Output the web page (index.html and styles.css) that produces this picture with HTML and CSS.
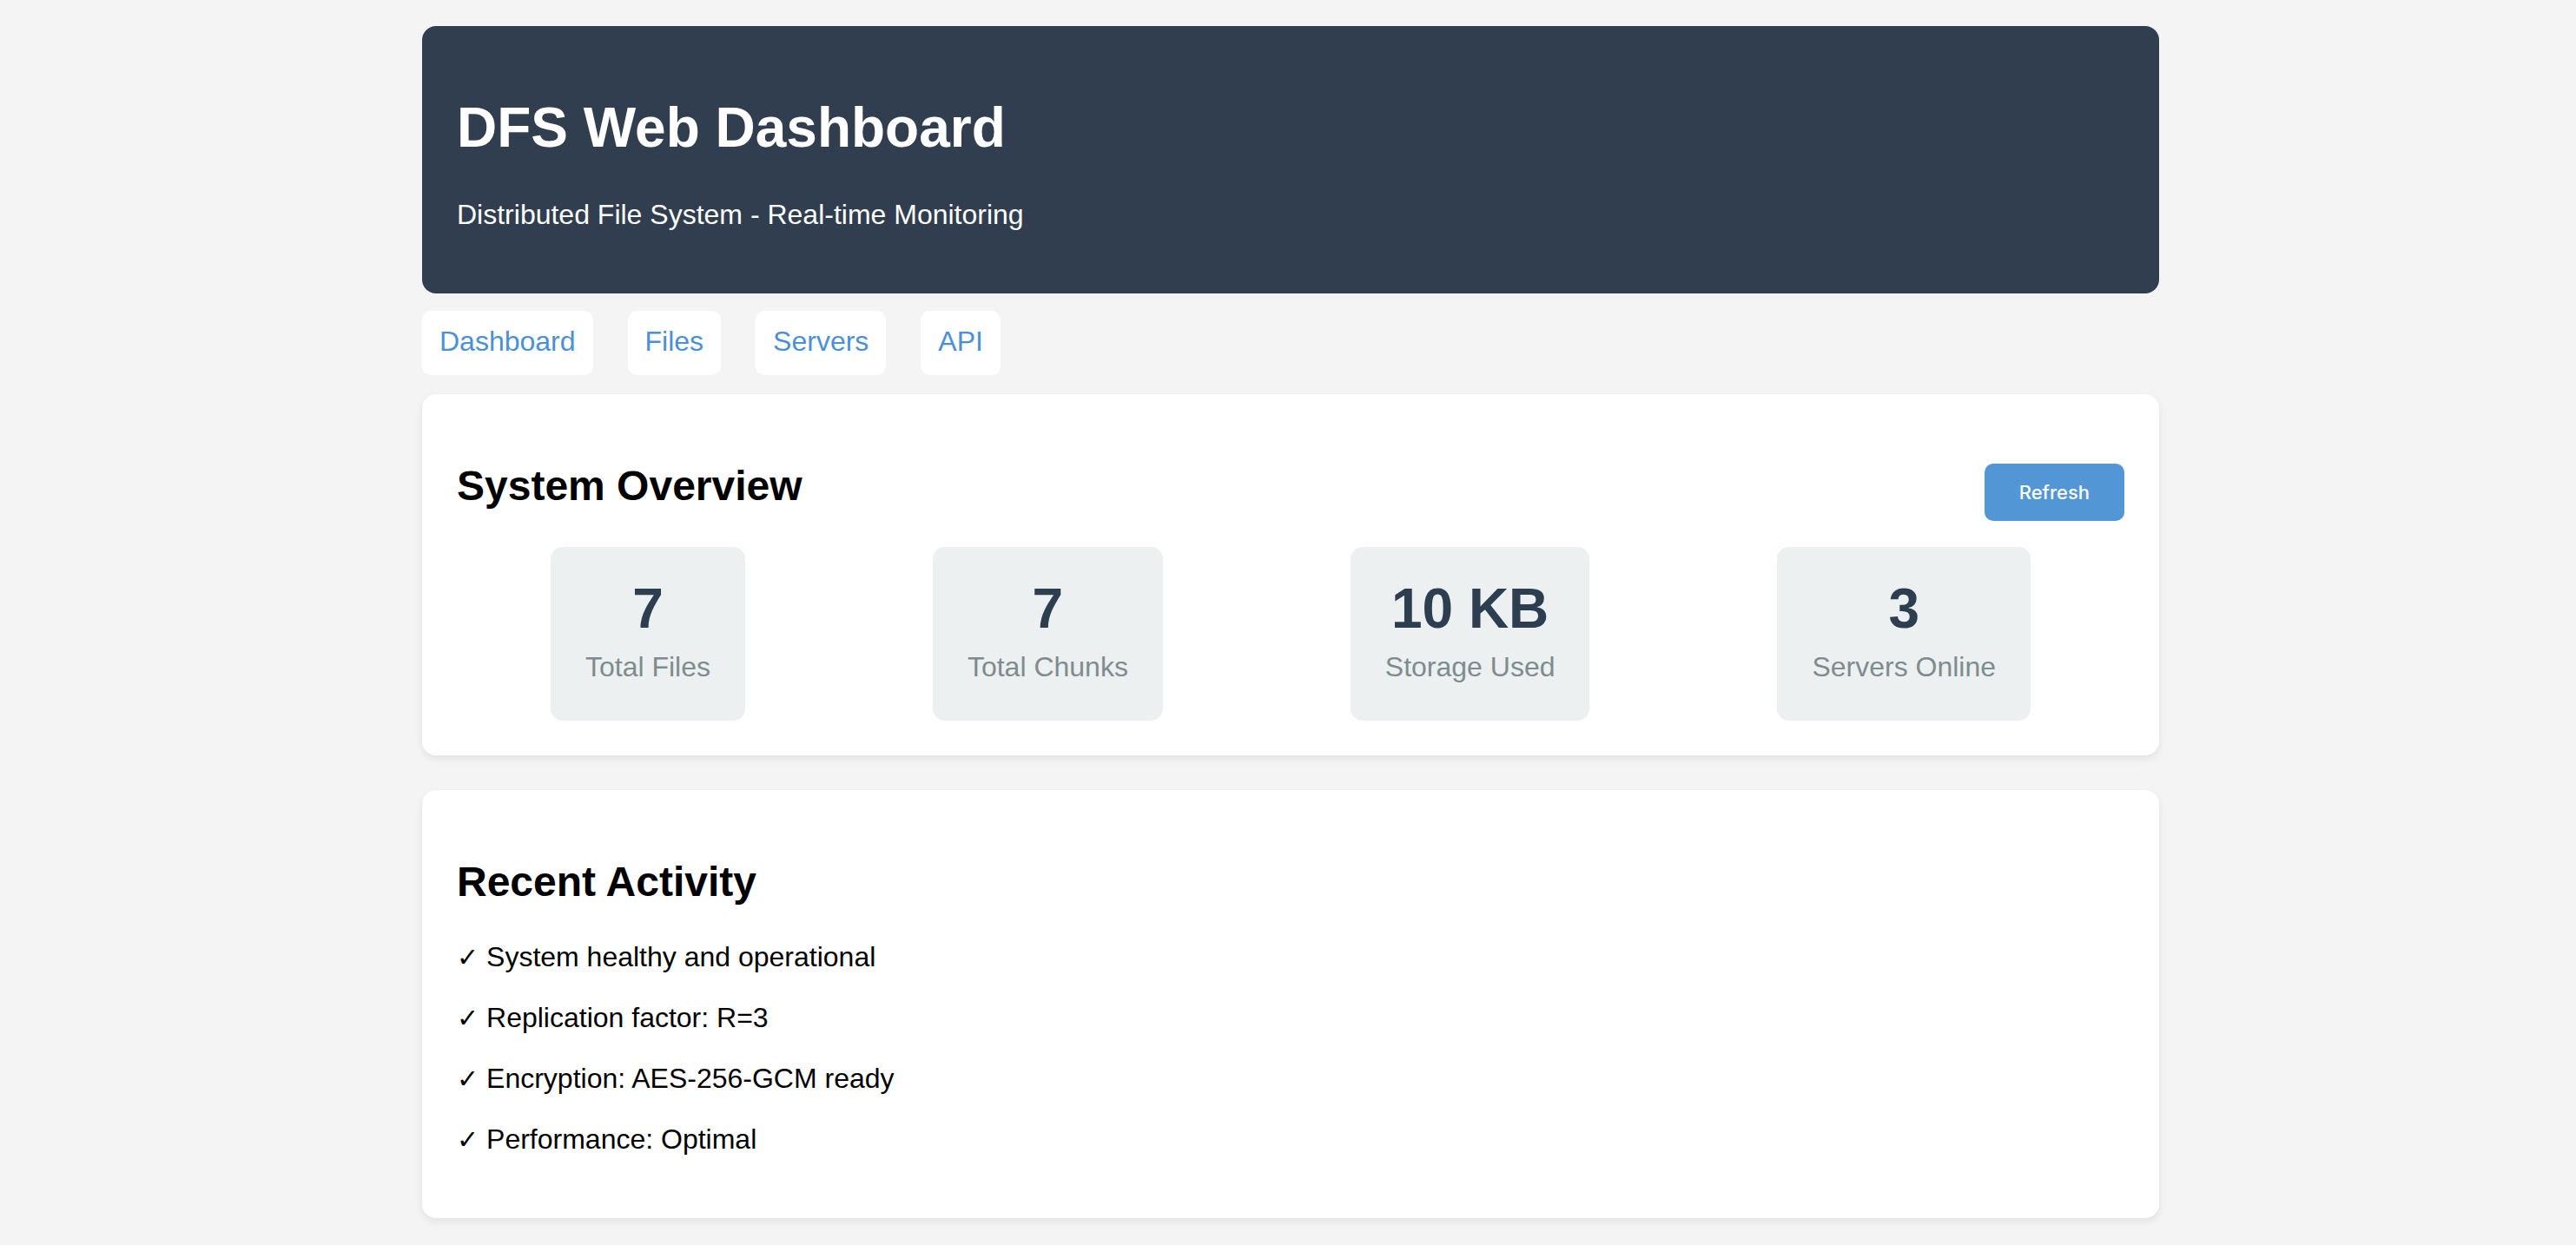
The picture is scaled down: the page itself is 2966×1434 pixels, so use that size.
FILE: index.html
```html
<!DOCTYPE html>
<html lang="en">
<head>
<meta charset="utf-8">
<title>DFS Web Dashboard</title>
<link rel="stylesheet" href="styles.css">
</head>
<body>
<div class="container">
  <header class="header">
    <h1>DFS Web Dashboard</h1>
    <p>Distributed File System - Real-time Monitoring</p>
  </header>

  <nav class="nav">
    <a href="#" class="nav-link">Dashboard</a>
    <a href="#" class="nav-link">Files</a>
    <a href="#" class="nav-link">Servers</a>
    <a href="#" class="nav-link">API</a>
  </nav>

  <section class="card">
    <div class="card-head">
      <h2>System Overview</h2>
      <button class="btn">Refresh</button>
    </div>
    <div class="stats">
      <div class="stat">
        <div class="stat-value">7</div>
        <div class="stat-label">Total Files</div>
      </div>
      <div class="stat">
        <div class="stat-value">7</div>
        <div class="stat-label">Total Chunks</div>
      </div>
      <div class="stat">
        <div class="stat-value">10 KB</div>
        <div class="stat-label">Storage Used</div>
      </div>
      <div class="stat">
        <div class="stat-value">3</div>
        <div class="stat-label">Servers Online</div>
      </div>
    </div>
  </section>

  <section class="card card-activity">
    <h2>Recent Activity</h2>
    <p class="activity"><span class="tick">✓</span> System healthy and operational</p>
    <p class="activity"><span class="tick">✓</span> Replication factor: R=3</p>
    <p class="activity"><span class="tick">✓</span> Encryption: AES-256-GCM ready</p>
    <p class="activity"><span class="tick">✓</span> Performance: Optimal</p>
  </section>
</div>
</body>
</html>
```

FILE: styles.css
```css
* {
  box-sizing: border-box;
}

body {
  margin: 0;
  padding: 30px 0 40px 6px;
  background: #f4f4f4;
  color: #000;
  font-family: "Liberation Sans", Arial, "DejaVu Sans", sans-serif;
  line-height: 1.15;
}

.container {
  max-width: 2000px;
  margin: 0 auto;
}

/* Header */
.header {
  background: #303e4f;
  color: #fff;
  border-radius: 16px;
  padding: 40px 40px;
}

.header h1 {
  font-size: 64px;
  font-weight: bold;
  margin: 41px 0 44px;
}

.header p {
  font-size: 32px;
  margin: 0 0 33px;
}

/* Nav */
.nav {
  display: flex;
  gap: 40px;
  margin-top: 20px;
}

.nav-link {
  display: block;
  background: #fff;
  color: #4a90d9;
  text-decoration: none;
  font-size: 32px;
  padding: 17px 20px 20.2px;
  border-radius: 10px;
}

/* Cards */
.card {
  background: #fff;
  border-radius: 16px;
  padding: 40px;
  margin-top: 22px;
  box-shadow: 0 4px 10px rgba(0, 0, 0, 0.08);
}

.card h2 {
  font-size: 48px;
  font-weight: bold;
  margin: 38px 0 42px;
}

.card-head {
  display: flex;
  justify-content: space-between;
  align-items: center;
}

.btn {
  margin-top: 11px;
  background: #5296d5;
  color: #fff;
  border: none;
  border-radius: 10px;
  font-family: Inter, "Noto Sans", sans-serif;
  font-size: 22px;
  font-weight: 500;
  line-height: 28px;
  padding: 19px 40px;
  cursor: pointer;
}

.stats {
  display: flex;
  justify-content: space-around;
}

.stat {
  background: #ecf0f1;
  border-radius: 14px;
  padding: 35px 40px 43px;
  text-align: center;
}

.stat-value {
  font-size: 64px;
  font-weight: bold;
  color: #2c3e50;
  margin-bottom: 12px;
}

.stat-label {
  font-size: 32px;
  color: #7f8c8d;
}

/* Activity */
.card-activity {
  margin-top: 40px;
}

.card-activity h2 {
  margin-bottom: 40px;
}

.activity {
  font-size: 32px;
  line-height: 38px;
  margin: 32px 0;
}

.tick {
  font-family: "DejaVu Sans", sans-serif;
  font-size: 30px;
  font-weight: bold;
  line-height: 0;
}
```
